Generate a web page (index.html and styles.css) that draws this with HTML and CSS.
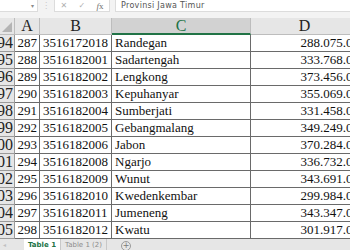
FILE: index.html
```html
<!DOCTYPE html>
<html lang="en">
<head>
    <meta charset="UTF-8">
    <title>Sheet</title>
    <link rel="stylesheet" href="styles.css">
</head>
<body>
    <div class="window">
        <div class="formula-bar">
            <div class="name-box"><span class="caret">&#9662;</span></div>
            <div class="grip">&#8942;</div>
            <div class="fx-box">
                <span class="fx-btn">&#10005;</span>
                <span class="fx-btn">&#10003;</span>
                <span class="fx-btn fx"><i>f</i>x</span>
            </div>
            <div class="formula-input">Provinsi Jawa Timur</div>
        </div>

        <div class="sheet">
            <div class="corner"></div>
            <div class="col-head">A</div>
            <div class="col-head">B</div>
            <div class="col-head active">C</div>
            <div class="col-head">D</div>
        </div>
        <div id="rows" class="sheet"></div>

        <div class="tab-bar">
            <span class="tab-nav">&#9666;</span>
            <span class="tab current">Table 1</span>
            <span class="tab">Table 1 (2)</span>
            <span class="tab-sep"></span>
            <span class="tab-add">+</span>
        </div>
    </div>

    <script>
        // rows 294 - 305 of the kelurahan list
        var data = [
            ['94', '287', '3516172018', 'Randegan', '288.075.00'],
            ['95', '288', '3516182001', 'Sadartengah', '333.768.00'],
            ['96', '289', '3516182002', 'Lengkong', '373.456.00'],
            ['97', '290', '3516182003', 'Kepuhanyar', '355.069.00'],
            ['98', '291', '3516182004', 'Sumberjati', '331.458.00'],
            ['99', '292', '3516182005', 'Gebangmalang', '349.249.00'],
            ['00', '293', '3516182006', 'Jabon', '370.284.00'],
            ['01', '294', '3516182008', 'Ngarjo', '336.732.00'],
            ['02', '295', '3516182009', 'Wunut', '343.691.00'],
            ['03', '296', '3516182010', 'Kwedenkembar', '299.984.00'],
            ['04', '297', '3516182011', 'Jumeneng', '343.347.00'],
            ['05', '298', '3516182012', 'Kwatu', '301.917.00']
        ];

        var rows = document.getElementById('rows');
        var classes = ['row-head', 'cell num', 'cell code', 'cell name', 'cell money'];

        data.forEach(function(row) {
            row.forEach(function(value, i) {
                var div = document.createElement('div');
                div.className = classes[i];
                div.textContent = value;
                rows.appendChild(div);
            });
        });
    </script>
</body>
</html>
```

FILE: styles.css
```css
body {
    margin: 0;
    overflow: hidden;
    background-color: #ffffff;
}
.window {
    width: 350px;
    height: 250px;
    overflow: hidden;
    display: flex;
    flex-direction: column;
}
.formula-bar {
    height: 12px;
    padding-bottom: 6px;
    background-color: #f3f3f3;
    display: flex;
    align-items: stretch;
    font-family: "DejaVu Sans", sans-serif;
    font-size: 8px;
    color: #9a9a9a;
}
.name-box {
    width: 37px;
    background-color: #ffffff;
    border-right: 1px solid #dcdcdc;
    border-bottom: 1px solid #dcdcdc;
    display: flex;
    justify-content: flex-end;
    align-items: center;
}
.caret {
    font-size: 6px;
    margin-right: 3px;
    color: #8a8a8a;
}
.grip {
    width: 16px;
    text-align: center;
    line-height: 12px;
    color: #c8c8c8;
}
.fx-box {
    width: 54px;
    background-color: #ffffff;
    border: 1px solid #dcdcdc;
    border-top: none;
    display: flex;
    justify-content: space-around;
    align-items: center;
}
.fx-btn {
    color: #b0b0b0;
}
.fx {
    font-family: "Liberation Serif", serif;
    font-size: 9px;
    color: #707070;
}
.formula-input {
    flex: 1;
    margin-left: 5px;
    padding-left: 5px;
    background-color: #ffffff;
    border-left: 1px solid #dcdcdc;
    border-bottom: 1px solid #dcdcdc;
    line-height: 12px;
    font-size: 8px;
    color: #555555;
    letter-spacing: 0.3px;
}
.sheet {
    display: grid;
    grid-template-columns: 15px 25px 72px 139px 108px;
    grid-auto-rows: 17px;
    font-family: "Liberation Serif", serif;
}
.sheet:first-of-type {
    grid-auto-rows: 16px;
}
.corner {
    background-color: #e6e6e6;
    border-right: 1px solid #bdbdbd;
    border-bottom: 1px solid #bdbdbd;
    position: relative;
}
.corner::after {
    content: "";
    position: absolute;
    right: 2px;
    bottom: 2px;
    border-left: 10px solid transparent;
    border-bottom: 10px solid #b4b4b4;
}
.col-head {
    background-color: #e6e6e6;
    border-right: 1px solid #bdbdbd;
    border-bottom: 1px solid #bdbdbd;
    text-align: center;
    font-size: 16px;
    line-height: 16px;
    color: #222222;
}
.col-head.active {
    background-color: #d2d2d2;
    color: #217346;
    border-bottom: 2px solid #217346;
    line-height: 15px;
}
.row-head {
    background-color: #e6e6e6;
    border-right: 1px solid #9b9b9b;
    border-bottom: 1px solid #9b9b9b;
    font-size: 16px;
    line-height: 16px;
    overflow: hidden;
    white-space: nowrap;
    direction: rtl;
    color: #222222;
    padding-right: 1px;
}
.cell {
    border-right: 1px solid #6a6a6a;
    border-bottom: 1px solid #6a6a6a;
    font-size: 13px;
    line-height: 16px;
    color: #111111;
    white-space: nowrap;
    overflow: hidden;
}
.num {
    text-align: right;
    padding-right: 2px;
}
.code {
    padding-left: 3px;
}
.name {
    padding-left: 3px;
}
.money {
    text-align: right;
    padding-right: 0;
    border-right: none;
}
.tab-bar {
    flex: 1;
    background-color: #e6e6e6;
    display: flex;
    align-items: stretch;
    font-family: "DejaVu Sans", sans-serif;
    font-size: 7px;
    color: #8c8c8c;
}
.tab-nav {
    width: 21px;
    padding-left: 3px;
    line-height: 12px;
    color: #c0c0c0;
    font-size: 6px;
}
.tab {
    padding: 0 4px;
    line-height: 12px;
    border-right: 1px solid #c8c8c8;
}
.tab.current {
    background-color: #ffffff;
    color: #217346;
    font-weight: bold;
    border-bottom: 2px solid #217346;
    line-height: 10px;
    padding-top: 1px;
}
.tab-sep {
    width: 14px;
}
.tab-add {
    width: 8px;
    height: 8px;
    margin-top: 2px;
    border: 1px solid #9a9a9a;
    border-radius: 50%;
    text-align: center;
    line-height: 8px;
    font-size: 8px;
    color: #7a7a7a;
}
```
